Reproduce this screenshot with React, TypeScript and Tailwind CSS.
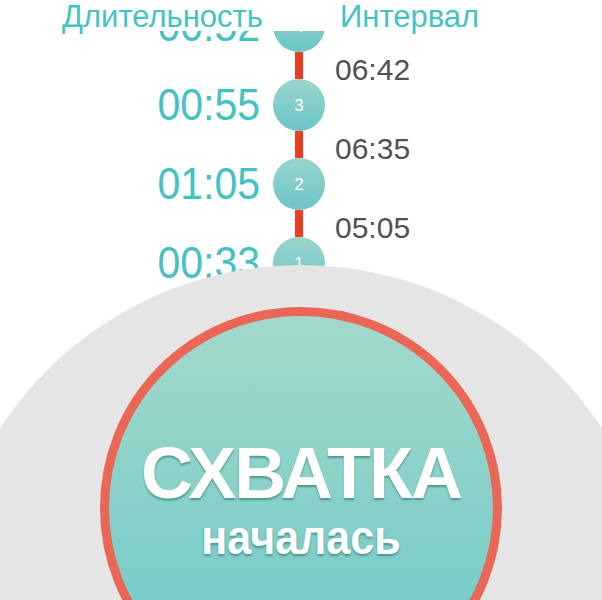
import React from "react";

const font = "font-['Liberation_Sans',Arial,sans-serif]";

function NodeRow({ dur, n }: { dur: string; n: string }) {
  return (
    <div className="flex h-[52px] items-center">
      <div className="w-[260px] origin-center scale-y-[1.08] text-right text-[41px] leading-none text-[#43c1c3]">{dur}</div>
      <div className="ml-[13px] flex h-[52px] w-[52px] items-center justify-center rounded-full bg-gradient-to-b from-[#98d5cb] to-[#6cc5c6] text-[17px] leading-none text-white">
        {n}
      </div>
    </div>
  );
}

function GapRow({ interval }: { interval: string }) {
  return (
    <div className="flex h-[27px] items-center">
      <div className="w-[260px]" />
      <div className="ml-[13px] flex h-full w-[52px] justify-center">
        <div className="h-full w-[8px] bg-[#f03c1e]" />
      </div>
      <div className="ml-[10px] pt-[9px] text-[30px] leading-none text-[#525252]">{interval}</div>
    </div>
  );
}

export default function App() {
  return (
    <div className={`relative h-[600px] w-[602px] overflow-hidden bg-white ${font}`}>
      <div className="flex flex-col">
        <NodeRow dur="00:52" n="4" />
        <GapRow interval="06:42" />
        <NodeRow dur="00:55" n="3" />
        <GapRow interval="06:35" />
        <NodeRow dur="01:05" n="2" />
        <GapRow interval="05:05" />
        <NodeRow dur="00:33" n="1" />
      </div>

      <div className="absolute left-0 top-0 flex h-[31px] w-full bg-white pl-[62px] pt-[1px] text-[31px] leading-none text-[#45c2c4]">
        <div className="w-[278px]">Длительность</div>
        <div>Интервал</div>
      </div>

      <div className="absolute left-[-58px] top-[265px] h-[718px] w-[718px] rounded-full bg-[#e5e5e5]" />

      <div className="absolute left-[100px] top-[307px] flex h-[402px] w-[402px] flex-col items-center rounded-full border-[9px] border-[#ea6656] bg-gradient-to-b from-[#a2d9ca] to-[#68c8c8] pt-[121px] text-white">
        <div className="text-[72px] font-bold leading-none tracking-[-2px] [text-shadow:0_2px_2px_rgba(30,100,100,0.55)]">
          СХВАТКА
        </div>
        <div className="mt-[10px] origin-bottom scale-y-[1.12] text-[43px] font-bold leading-none [text-shadow:0_2px_2px_rgba(30,100,100,0.55)]">
          началась
        </div>
      </div>
    </div>
  );
}
